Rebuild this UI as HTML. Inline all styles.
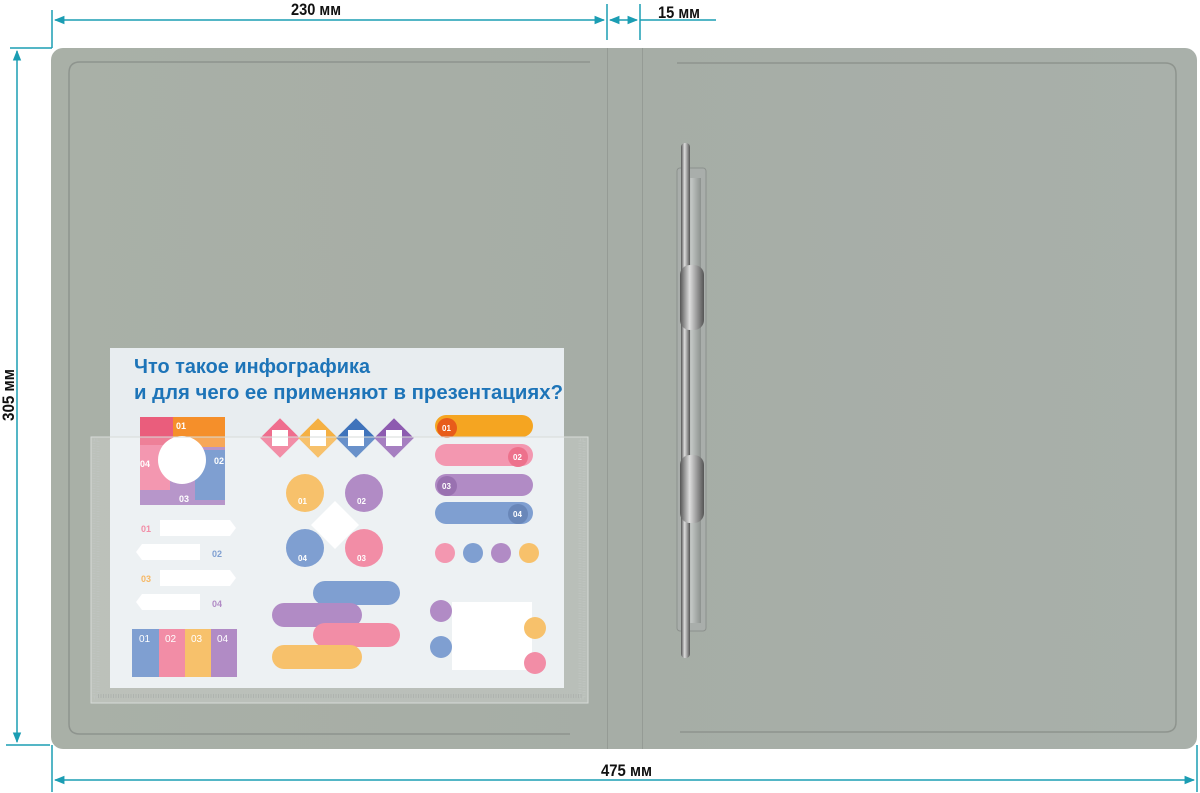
<!DOCTYPE html>
<html><head><meta charset="utf-8"><style>
html,body{margin:0;padding:0;background:#fff;width:1200px;height:793px;overflow:hidden;font-family:"Liberation Sans",sans-serif}
</style></head><body>
<svg width="1200" height="793" viewBox="0 0 1200 793" xmlns="http://www.w3.org/2000/svg">
<defs>
<linearGradient id="fold" x1="0" x2="1" y1="0" y2="0">
<stop offset="0" stop-color="#a9b0a7"/><stop offset="0.5" stop-color="#a6ada6"/><stop offset="1" stop-color="#a9b0aa"/></linearGradient>
<linearGradient id="rod" x1="0" x2="1"><stop offset="0" stop-color="#555"/><stop offset="0.4" stop-color="#ddd"/><stop offset="1" stop-color="#555"/></linearGradient>
<linearGradient id="plate" x1="0" x2="1"><stop offset="0" stop-color="#8a8f8c"/><stop offset="0.5" stop-color="#c4c8c6"/><stop offset="1" stop-color="#8a8f8c"/></linearGradient>
<marker id="ar" viewBox="0 0 10 10" refX="9" refY="5" markerWidth="7" markerHeight="7" orient="auto-start-reverse"><path d="M0 1 L10 5 L0 9 Z" fill="#1b9db3"/></marker>
</defs>
<rect x="51" y="48" width="1146" height="701" rx="12" fill="url(#fold)"/>
<line x1="607.5" y1="48" x2="607.5" y2="749" stroke="#959b95" stroke-width="1"/>
<line x1="642.5" y1="48" x2="642.5" y2="749" stroke="#959b95" stroke-width="1"/>
<path d="M590 62 H80 Q69 62 69 73 V724 Q69 734 80 734 H570" fill="none" stroke="#8e948e" stroke-width="1.5"/>
<path d="M677 63 H1165 Q1176 63 1176 74 V722 Q1176 732 1165 732 H680" fill="none" stroke="#8e948e" stroke-width="1.5"/>
<rect x="110" y="348" width="454" height="340" fill="#e8edf0"/>
<text x="134" y="373" font-size="20" font-weight="bold" fill="#1d74b8" textLength="236" lengthAdjust="spacingAndGlyphs">Что  такое инфографика</text>
<text x="134" y="399" font-size="20" font-weight="bold" fill="#1d74b8" textLength="429" lengthAdjust="spacingAndGlyphs">и для чего ее применяют в презентациях?</text>
<path d="M140 420 h85 v85 h-85z" fill="#9b6bb5" opacity="0.9"/>
<rect x="140" y="417" width="45" height="40" fill="#ea5d7c"/>
<rect x="173" y="417" width="52" height="30" fill="#f58f2a"/>
<rect x="140" y="445" width="30" height="45" fill="#f07a9a"/>
<rect x="195" y="450" width="30" height="50" fill="#5b84c4"/>
<circle cx="182" cy="460" r="24" fill="#fff"/>
<text x="176" y="429" font-size="9" fill="#fff" font-weight="bold">01</text>
<text x="140" y="467" font-size="9" fill="#fff" font-weight="bold">04</text>
<text x="214" y="464" font-size="9" fill="#fff" font-weight="bold">02</text>
<text x="179" y="502" font-size="9" fill="#fff" font-weight="bold">03</text>
<g font-size="9" font-weight="bold">
<path d="M160 520 h70 l6 8 -6 8 h-70z" fill="#fff"/><text x="141" y="532" fill="#ef6e8e">01</text>
<path d="M136 552 l6 -8 h58 v16 h-58z" fill="#fff"/><text x="212" y="557" fill="#5b84c4">02</text>
<path d="M160 570 h70 l6 8 -6 8 h-70z" fill="#fff"/><text x="141" y="582" fill="#f5a53a">03</text>
<path d="M136 602 l6 -8 h58 v16 h-58z" fill="#fff"/><text x="212" y="607" fill="#9b6bb5">04</text>
</g>
<rect x="132" y="629" width="27" height="48" fill="#5b84c4"/>
<rect x="159" y="629" width="26" height="48" fill="#ef6e8e"/>
<rect x="185" y="629" width="26" height="48" fill="#f5b042"/>
<rect x="211" y="629" width="26" height="48" fill="#9b6bb5"/>
<g font-size="10" fill="#fff"><text x="139" y="642">01</text><text x="165" y="642">02</text><text x="191" y="642">03</text><text x="217" y="642">04</text></g>
<g>
<rect x="266" y="424" width="28" height="28" transform="rotate(45 280 438)" fill="#ef6e8e"/>
<rect x="304" y="424" width="28" height="28" transform="rotate(45 318 438)" fill="#f5b042"/>
<rect x="342" y="424" width="28" height="28" transform="rotate(45 356 438)" fill="#3f73bb"/>
<rect x="380" y="424" width="28" height="28" transform="rotate(45 394 438)" fill="#8d5bb0"/>
<g fill="#fff"><rect x="272" y="430" width="16" height="16"/><rect x="310" y="430" width="16" height="16"/><rect x="348" y="430" width="16" height="16"/><rect x="386" y="430" width="16" height="16"/></g>
</g>
<circle cx="305" cy="493" r="19" fill="#f5b042"/><circle cx="364" cy="493" r="19" fill="#9b6bb5"/>
<circle cx="305" cy="548" r="19" fill="#5b84c4"/><circle cx="364" cy="548" r="19" fill="#ef6e8e"/>
<rect x="318" y="508" width="34" height="34" transform="rotate(45 335 525)" fill="#fff"/>
<g font-size="8" fill="#fff" font-weight="bold"><text x="298" y="504">01</text><text x="357" y="504">02</text><text x="298" y="561">04</text><text x="357" y="561">03</text></g>
<rect x="313" y="581" width="87" height="24" rx="12" fill="#5b84c4"/>
<rect x="272" y="603" width="90" height="24" rx="12" fill="#9b6bb5"/>
<rect x="313" y="623" width="87" height="24" rx="12" fill="#ef6e8e"/>
<rect x="272" y="645" width="90" height="24" rx="12" fill="#f5b042"/>
<rect x="435" y="415" width="98" height="22" rx="11" fill="#f5a521"/><circle cx="447" cy="428" r="10" fill="#e85c1a"/>
<rect x="435" y="444" width="98" height="22" rx="11" fill="#f07a9a"/><circle cx="518" cy="457" r="10" fill="#e84a6c"/>
<rect x="435" y="474" width="98" height="22" rx="11" fill="#9b6bb5"/><circle cx="447" cy="486" r="10" fill="#7d4a9a"/>
<rect x="435" y="502" width="98" height="22" rx="11" fill="#5b84c4"/><circle cx="518" cy="514" r="10" fill="#3f66a6"/>
<g font-size="8" fill="#fff" font-weight="bold"><text x="442" y="431">01</text><text x="513" y="460">02</text><text x="442" y="489">03</text><text x="513" y="517">04</text></g>
<circle cx="445" cy="553" r="10" fill="#f07a9a"/><circle cx="473" cy="553" r="10" fill="#5b84c4"/><circle cx="501" cy="553" r="10" fill="#9b6bb5"/><circle cx="529" cy="553" r="10" fill="#f5b042"/>
<rect x="452" y="602" width="80" height="68" fill="#fff"/>
<circle cx="441" cy="611" r="11" fill="#9b6bb5"/><circle cx="441" cy="647" r="11" fill="#5b84c4"/>
<circle cx="535" cy="628" r="11" fill="#f5b042"/><circle cx="535" cy="663" r="11" fill="#ef6e8e"/>
<rect x="91" y="437" width="497" height="266" fill="#ffffff" fill-opacity="0.22" stroke="#d7dbd8" stroke-width="1"/>
<rect x="94" y="440" width="4" height="258" fill="none" stroke="#bfc4c0" stroke-dasharray="1 1.5" stroke-width="3"/>
<rect x="580" y="440" width="4" height="258" fill="none" stroke="#bfc4c0" stroke-dasharray="1 1.5" stroke-width="3"/>
<line x1="98" y1="696" x2="582" y2="696" stroke="#aeb3af" stroke-dasharray="1 1.5" stroke-width="4"/>
<rect x="677" y="168" width="29" height="463" rx="3" fill="#a9aeab" stroke="#8c918d"/>
<rect x="682" y="178" width="19" height="445" fill="url(#plate)" opacity="0.9"/>
<rect x="681" y="143" width="9" height="515" rx="4" fill="url(#rod)"/>
<rect x="680" y="265" width="24" height="65" rx="10" fill="url(#rod)"/>
<rect x="680" y="455" width="24" height="68" rx="10" fill="url(#rod)"/>
<g stroke="#1b9db3" stroke-width="1.5" fill="none">
<line x1="52" y1="10" x2="52" y2="48"/><line x1="607" y1="4" x2="607" y2="40"/><line x1="640" y1="4" x2="640" y2="40"/>
<line x1="55" y1="20" x2="604" y2="20" marker-start="url(#ar)" marker-end="url(#ar)"/>
<line x1="610" y1="20" x2="637" y2="20" marker-start="url(#ar)" marker-end="url(#ar)"/>
<line x1="640" y1="20" x2="716" y2="20"/>
<line x1="10" y1="48" x2="52" y2="48"/><line x1="6" y1="745" x2="50" y2="745"/>
<line x1="17" y1="51" x2="17" y2="742" marker-start="url(#ar)" marker-end="url(#ar)"/>
<line x1="52" y1="745" x2="52" y2="792"/><line x1="1197" y1="745" x2="1197" y2="792"/>
<line x1="55" y1="780" x2="1194" y2="780" marker-start="url(#ar)" marker-end="url(#ar)"/>
</g>
<g font-size="17" font-weight="bold" fill="#111">
<text x="291" y="15" textLength="50" lengthAdjust="spacingAndGlyphs">230 мм</text>
<text x="658" y="18" textLength="42" lengthAdjust="spacingAndGlyphs">15 мм</text>
<text x="601" y="776" textLength="51" lengthAdjust="spacingAndGlyphs">475 мм</text>
<text transform="translate(14 421) rotate(-90)" textLength="52" lengthAdjust="spacingAndGlyphs">305 мм</text>
</g>
</svg>
</body></html>
